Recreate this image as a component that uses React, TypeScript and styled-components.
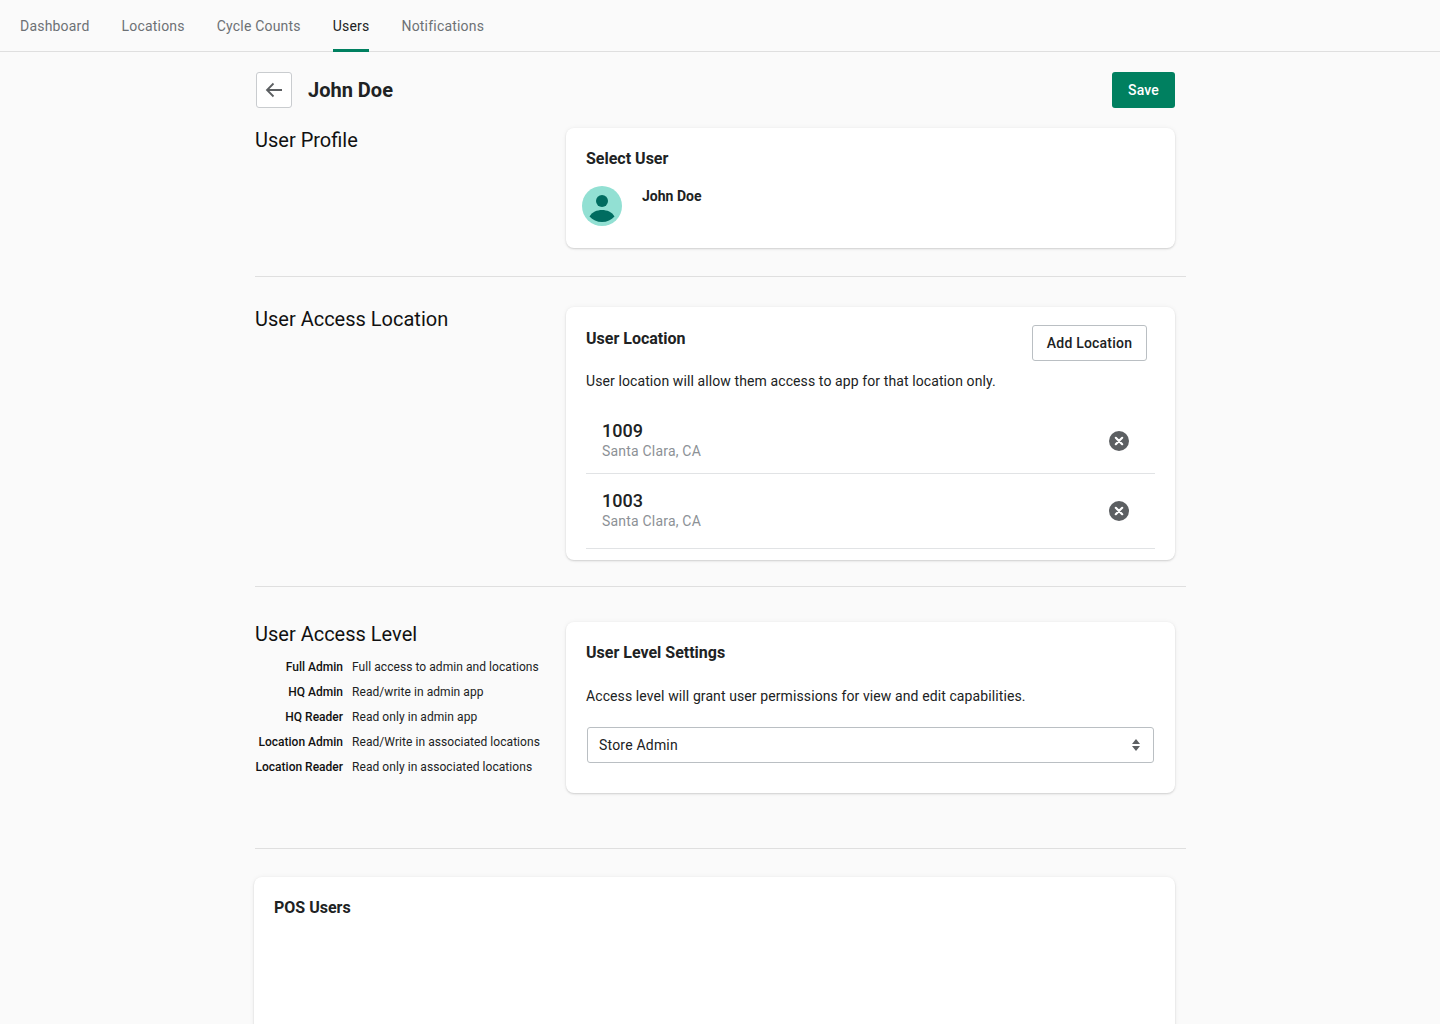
import React from 'react';
import styled, { createGlobalStyle } from 'styled-components';

const TABS = ['Dashboard', 'Locations', 'Cycle Counts', 'Users', 'Notifications'];

const LOCATIONS = [
  { id: '1009', place: 'Santa Clara, CA' },
  { id: '1003', place: 'Santa Clara, CA' },
];

const LEVELS = [
  { name: 'Full Admin', text: 'Full access to admin and locations' },
  { name: 'HQ Admin', text: 'Read/write in admin app' },
  { name: 'HQ Reader', text: 'Read only in admin app' },
  { name: 'Location Admin', text: 'Read/Write in associated locations' },
  { name: 'Location Reader', text: 'Read only in associated locations' },
];

const GlobalStyle = createGlobalStyle`
  html, body {
    margin: 0;
    padding: 0;
    height: 1024px;
    overflow: hidden;
    background: #fafafa;
    font-family: Roboto, "Liberation Sans", sans-serif;
    color: #202223;
  }
  * { box-sizing: border-box; }
`;

const Nav = styled.nav`
  display: flex;
  gap: 32px;
  height: 52px;
  padding-left: 20px;
  border-bottom: 1px solid #dfdfdf;
`;

const Tab = styled.a<{ $active?: boolean }>`
  display: flex;
  align-items: center;
  height: 52px;
  padding-bottom: 1px;
  font-size: 14px;
  letter-spacing: 0.2px;
  color: ${(p) => (p.$active ? '#202223' : '#6d7175')};
  border-bottom: 3px solid ${(p) => (p.$active ? '#008060' : 'transparent')};
  padding-top: 3px;
`;

const Main = styled.main`
  width: 931px;
  margin-left: 255px;
`;

const Header = styled.header`
  display: flex;
  align-items: center;
  gap: 16px;
  width: 920px;
  height: 36px;
  margin-top: 20px;
  padding-left: 1px;
`;

const BackButton = styled.button`
  display: flex;
  align-items: center;
  justify-content: center;
  width: 36px;
  height: 36px;
  padding: 0;
  background: #fff;
  border: 1px solid #c9cccf;
  border-radius: 3px;
  color: #5c5f62;
`;

const PageTitle = styled.h1`
  flex: 1;
  margin: 0;
  font-size: 20px;
  font-weight: 700;
  color: #202223;
`;

const SaveButton = styled.button`
  width: 63px;
  height: 36px;
  padding: 0;
  background: #008060;
  border: 0;
  border-radius: 3px;
  color: #fff;
  font-family: inherit;
  font-size: 14px;
  font-weight: 500;
  letter-spacing: 0.2px;
`;

const Section = styled.section<{ $top: number; $bottom: number; $rule?: boolean }>`
  display: grid;
  grid-template-columns: 311px 609px;
  padding-top: ${(p) => p.$top}px;
  padding-bottom: ${(p) => p.$bottom}px;
  border-bottom: ${(p) => (p.$rule ? '1px solid #dfdfdf' : '0')};
`;

const SectionTitle = styled.h2`
  margin: 0;
  font-size: 20px;
  font-weight: 400;
  line-height: 24px;
  color: #111;
`;

const Card = styled.div<{ $height: number }>`
  height: ${(p) => p.$height}px;
  background: #fff;
  border-radius: 8px;
  box-shadow: 0 0 5px rgba(23, 24, 24, 0.05), 0 1px 2px rgba(0, 0, 0, 0.15);
  padding: 0 20px;
`;

const CardTitle = styled.h3`
  margin: 0;
  font-size: 16px;
  font-weight: 700;
  line-height: 20px;
  color: #202223;
`;

const SelectUserTitle = styled(CardTitle)`
  padding-top: 21px;
`;

const UserRow = styled.div`
  display: flex;
  gap: 20px;
  margin: 17px 0 0 -4px;
`;

const UserName = styled.div`
  padding-top: 2px;
  font-size: 14px;
  font-weight: 700;
  line-height: 16px;
`;

const CardHead = styled.div`
  display: flex;
  justify-content: space-between;
  align-items: flex-start;
  padding: 18px 8px 0 0;
`;

const LocationTitle = styled(CardTitle)`
  padding-top: 4px;
`;

const OutlineButton = styled.button`
  width: 115px;
  height: 36px;
  padding: 0;
  background: #fff;
  border: 1px solid #babfc3;
  border-radius: 3px;
  color: #202223;
  font-family: inherit;
  font-size: 14px;
  font-weight: 500;
  letter-spacing: 0.2px;
`;

const HelpText = styled.p<{ $top: number }>`
  margin: ${(p) => p.$top}px 0 0;
  font-size: 14px;
  line-height: 20px;
  letter-spacing: 0.1px;
  color: #202223;
`;

const LocationList = styled.ul`
  list-style: none;
  margin: 18px 0 0;
  padding: 0;
`;

const LocationRow = styled.li<{ $height: number }>`
  display: flex;
  align-items: center;
  justify-content: space-between;
  height: ${(p) => p.$height}px;
  padding: 0 26px 0 16px;
  border-bottom: 1px solid #e1e3e5;
`;

const LocationId = styled.div`
  font-size: 18px;
  font-weight: 500;
  line-height: 20px;
  color: #202223;
`;

const LocationPlace = styled.div`
  font-size: 14px;
  line-height: 20px;
  letter-spacing: 0.2px;
  color: #8c9196;
`;

const LevelTable = styled.div`
  display: grid;
  grid-template-columns: 88px auto;
  justify-content: start;
  column-gap: 9px;
  margin-top: 9px;
`;

const LevelName = styled.div`
  height: 25px;
  font-size: 12px;
  font-weight: 500;
  line-height: 25px;
  text-align: right;
  white-space: nowrap;
  color: #111;
`;

const LevelText = styled.div`
  height: 25px;
  font-size: 12px;
  line-height: 25px;
  letter-spacing: 0.06px;
  white-space: nowrap;
  color: #202223;
`;

const SelectBox = styled.div`
  display: flex;
  align-items: center;
  justify-content: space-between;
  height: 36px;
  margin: 21px 1px 0;
  padding: 0 12px 0 11px;
  border: 1px solid #babfc3;
  border-radius: 3px;
  font-size: 14px;
  letter-spacing: 0.2px;
  color: #202223;
`;

const PosCard = styled.div`
  width: 921px;
  height: 200px;
  margin: 28px 0 0 -1px;
  padding: 21px 20px;
  background: #fff;
  border-radius: 8px;
  box-shadow: 0 0 5px rgba(23, 24, 24, 0.05), 0 1px 2px rgba(0, 0, 0, 0.15);
`;

function Avatar() {
  return (
    <svg width="40" height="40" viewBox="0 0 40 40">
      <circle cx="20" cy="20" r="20" fill="#92e0d3" />
      <circle cx="20" cy="15" r="6" fill="#006c60" />
      <path d="M7.5 30.5C10 26 15 24 20 24s10 2 12.500 6.500C29.500 34 25 36 20 36s-9.500-2-12.500-5.500z" fill="#006c60" />
    </svg>
  );
}

function RemoveIcon() {
  return (
    <svg width="20" height="20" viewBox="0 0 20 20">
      <circle cx="10" cy="10" r="10" fill="#5c5f62" />
      <path d="M6.800 6.800l6.400 6.400M13.200 6.800l-6.400 6.400" stroke="#fff" strokeWidth="2.200" strokeLinecap="round" />
    </svg>
  );
}

function App() {
  return (
    <>
      <GlobalStyle />
      <Nav>
        {TABS.map((tab) => (
          <Tab key={tab} $active={tab === 'Users'}>{tab}</Tab>
        ))}
      </Nav>
      <Main>
        <Header>
          <BackButton>
            <svg width="20" height="20" viewBox="0 0 20 20" fill="none">
              <path d="M18 10H3M9.500 3.500L3 10l6.500 6.500" stroke="currentColor" strokeWidth="1.800" />
            </svg>
          </BackButton>
          <PageTitle>John Doe</PageTitle>
          <SaveButton>Save</SaveButton>
        </Header>

        <Section $top={20} $bottom={28} $rule>
          <SectionTitle>User Profile</SectionTitle>
          <Card $height={120}>
            <SelectUserTitle>Select User</SelectUserTitle>
            <UserRow>
              <Avatar />
              <UserName>John Doe</UserName>
            </UserRow>
          </Card>
        </Section>

        <Section $top={30} $bottom={26} $rule>
          <SectionTitle>User Access Location</SectionTitle>
          <Card $height={253}>
            <CardHead>
              <LocationTitle>User Location</LocationTitle>
              <OutlineButton>Add Location</OutlineButton>
            </CardHead>
            <HelpText $top={10}>User location will allow them access to app for that location only.</HelpText>
            <LocationList>
              {LOCATIONS.map((loc, i) => (
                <LocationRow key={loc.id} $height={i === 0 ? 65 : 75}>
                  <div>
                    <LocationId>{loc.id}</LocationId>
                    <LocationPlace>{loc.place}</LocationPlace>
                  </div>
                  <RemoveIcon />
                </LocationRow>
              ))}
            </LocationList>
          </Card>
        </Section>

        <Section $top={35} $bottom={55} $rule>
          <div>
            <SectionTitle>User Access Level</SectionTitle>
            <LevelTable>
              {LEVELS.map((level) => (
                <React.Fragment key={level.name}>
                  <LevelName>{level.name}</LevelName>
                  <LevelText>{level.text}</LevelText>
                </React.Fragment>
              ))}
            </LevelTable>
          </div>
          <Card $height={171}>
            <SelectUserTitle>User Level Settings</SelectUserTitle>
            <HelpText $top={23}>Access level will grant user permissions for view and edit capabilities.</HelpText>
            <SelectBox>
              Store Admin
              <svg width="10" height="14" viewBox="0 0 10 14">
                <path d="M5 1l4 5H1zM5 13L1 8h8z" fill="#5c5f62" />
              </svg>
            </SelectBox>
          </Card>
        </Section>

        <PosCard>
          <CardTitle>POS Users</CardTitle>
        </PosCard>
      </Main>
    </>
  );
}

export default App;
